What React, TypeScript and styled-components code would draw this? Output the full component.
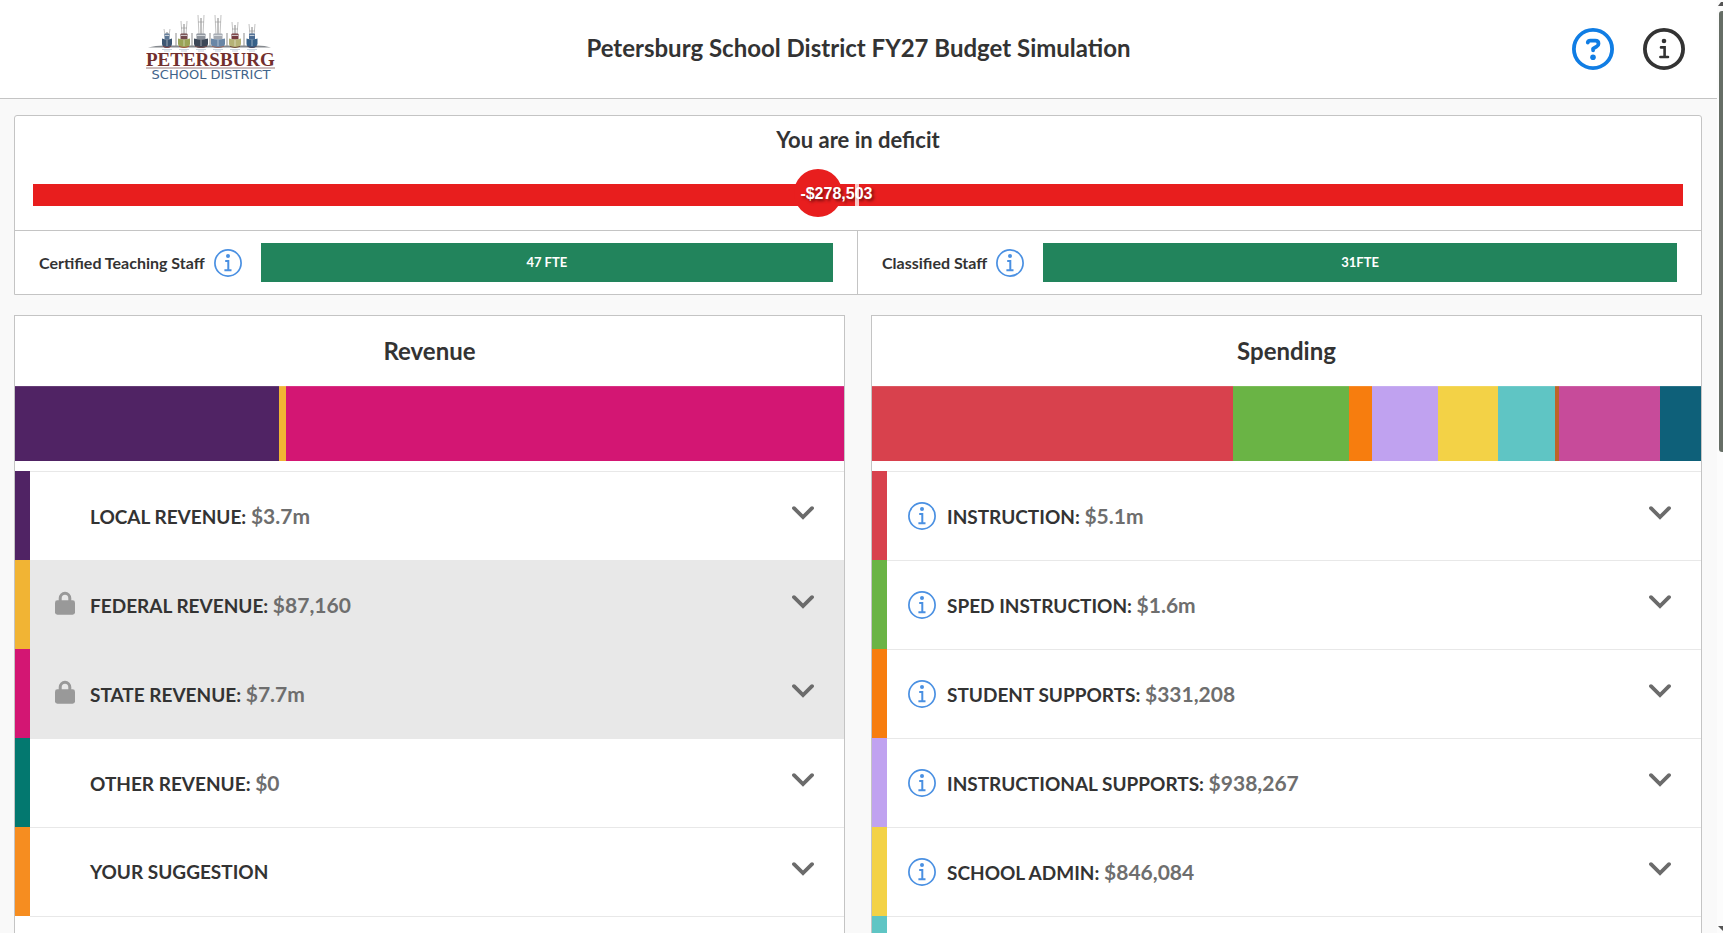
import React from "react";
import styled, { createGlobalStyle } from "styled-components";

const GlobalStyle = createGlobalStyle`
  *, *::before, *::after { box-sizing: border-box; }
  body {
    margin: 0;
    background: #f9f9f9;
    color: #333;
    font-family: Lato, "Open Sans", sans-serif;
    font-weight: 700;
  }
  h1, h2, h3, p, ul { margin: 0; padding: 0; }
  button { margin: 0; padding: 0; border: 0; background: none; color: inherit; font: inherit; cursor: pointer; }
  svg { display: block; }
`;

const Shell = styled.div`
  display: grid;
  grid-template-columns: minmax(0, 1fr) 6px;
  height: 100vh;
  overflow: hidden;
`;

const Page = styled.div`
  min-width: 0;
  overflow: hidden;
`;

const Header = styled.header`
  display: grid;
  grid-template-columns: 1fr auto 1fr;
  align-items: center;
  height: 99px;
  padding: 0 32px;
  background: #fff;
  border-bottom: 1px solid #c4c4c4;
`;

const LogoLink = styled.a`
  justify-self: start;
  margin: 0 0 2px 114px;
`;

const PageTitle = styled.h1`
  margin-bottom: 2px;
  font-size: 24px;
  line-height: 28px;
`;

const HeaderActions = styled.div`
  display: flex;
  justify-self: end;
  gap: 29px;
`;

const Main = styled.main`
  padding: 16px 15px 0 14px;
`;

const ScoreCard = styled.section`
  background: #fff;
  border: 1px solid #c4c4c4;
  border-radius: 3px 3px 0 0;
`;

const Balance = styled.div`
  height: 114px;
  padding: 11px 18px 0;
  text-align: center;
`;

const BalanceTitle = styled.h2`
  font-size: 22px;
  line-height: 26px;
`;

const Track = styled.div`
  position: relative;
  height: 22px;
  margin-top: 31px;
  background: #e81e1e;
`;

const Knob = styled.div`
  position: absolute;
  top: 50%;
  left: 47.6%;
  display: flex;
  align-items: center;
  width: 48px;
  height: 48px;
  margin: -26px 0 0 -24px;
  padding: 2px 0 0 6px;
  border-radius: 50%;
  background: #e81e1e;
  color: #fff;
  font: 700 16px/20px "Liberation Sans", Arial, sans-serif;
  text-shadow: 2px 2px 3px rgba(0, 0, 0, 0.5);
  white-space: nowrap;
`;

const MidMark = styled.div`
  position: absolute;
  top: 0;
  left: 50%;
  width: 4px;
  height: 100%;
  margin-left: -3px;
  background: rgba(255, 255, 255, 0.75);
`;

const StaffRow = styled.div`
  display: grid;
  grid-template-columns: 1fr 1fr;
  border-top: 1px solid #c4c4c4;
`;

const StaffCell = styled.div`
  display: flex;
  align-items: center;
  height: 63px;
  padding: 0 24px;
  &:first-child { border-right: 1px solid #c4c4c4; }
`;

const StaffLabel = styled.h3`
  margin-right: 9px;
  font-size: 16px;
  line-height: 20px;
  white-space: nowrap;
`;

const StaffBar = styled.div`
  flex: 1;
  margin-left: 19px;
  background: #22845c;
  color: #fff;
  font-size: 13px;
  line-height: 39px;
  text-align: center;
`;

const Columns = styled.div`
  display: grid;
  grid-template-columns: 1fr 1fr;
  gap: 26px;
  margin-top: 20px;
`;

const Column = styled.section`
  background: #fff;
  border: 1px solid #c4c4c4;
`;

const ColumnTitle = styled.h2`
  font-size: 24px;
  line-height: 70px;
  text-align: center;
`;

const Segments = styled.div`
  display: flex;
  height: 75px;
  margin-bottom: 10px;
`;

const Segment = styled.div<{ $color: string; $share: number }>`
  flex: ${(p) => p.$share} 1 0;
  background: ${(p) => p.$color};
  border-top: 1px solid rgba(255, 255, 255, 0.12);
`;

const Rows = styled.ul`
  list-style: none;
`;

const Row = styled.li<{ $color: string; $locked?: boolean }>`
  display: flex;
  height: 89px;
  background: ${(p) => (p.$locked ? "#e8e8e8" : "#fff")};
  &::before {
    content: "";
    width: 15px;
    background: ${(p) => p.$color};
  }
`;

const RowBody = styled.div`
  display: flex;
  flex: 1;
  align-items: center;
  padding-right: 30px;
  border-top: 1px solid #e8e8e8;
`;

const IconSlot = styled.div`
  display: flex;
  justify-content: center;
  width: 28px;
  margin: 0 11px 0 21px;
`;

const RowToggle = styled.button`
  display: flex;
  flex: 1;
  align-items: center;
  justify-content: space-between;
  height: 100%;
  font-size: 19px;
  line-height: 24px;
  text-align: left;
  svg { margin-bottom: 6px; }
`;

const Amount = styled.span`
  color: #6e6e6e;
  font-size: 21px;
`;

const Scrollbar = styled.div`
  display: flex;
  flex-direction: column;
  align-items: flex-end;
  padding: 2px 0;
  background: #fcfcfc;
`;

const Thumb = styled.div`
  flex: 0 0 calc(47% + 4px);
  width: 4px;
  margin: 4px 0 auto;
  border-radius: 3px 0 0 3px;
  background: #666e66;
`;

const InfoIcon = () => (
  <svg width="28" height="28" viewBox="0 0 28 28" fill="none" stroke="#4a90e2">
    <circle cx="14" cy="14" r="13.1" strokeWidth="1.7" />
    <circle cx="14" cy="7" r="2" fill="#4a90e2" stroke="none" />
    <path d="M11.2 12H14.3V21.2M10.4 21.2H17.5" strokeWidth="2" />
  </svg>
);

const HelpIcon = () => (
  <svg width="42" height="42" viewBox="0 0 42 42" fill="none" stroke="#107de4">
    <circle cx="21" cy="21" r="19.1" strokeWidth="3.8" />
    <path
      d="M15.8 14.6V14.2Q16.2 12.7 18.4 12.7H23.2Q26.5 12.7 26.5 15.7Q26.5 17.6 24.5 18.7L21.1 20.6V22.3"
      strokeWidth="3.8"
      strokeLinecap="round"
      strokeLinejoin="round"
    />
    <circle cx="21" cy="29.3" r="2.8" fill="#107de4" stroke="none" />
  </svg>
);

const AboutIcon = () => (
  <svg width="42" height="42" viewBox="0 0 42 42" fill="none" stroke="#333">
    <circle cx="21" cy="21" r="19.1" strokeWidth="3.8" />
    <circle cx="21" cy="13" r="2.3" fill="#333" stroke="none" />
    <path d="M18 19.4H21.6V29M17.4 29H25" strokeWidth="2.6" strokeLinecap="round" />
  </svg>
);

const LockIcon = () => (
  <svg width="20" height="28" viewBox="0 0 20 28">
    <path d="M5.2 11V7.2a4.8 5 0 0 1 9.6 0V11" fill="none" stroke="#999" strokeWidth="3" />
    <rect y="9.3" width="20" height="14.4" rx="2.4" fill="#999" />
  </svg>
);

const Chevron = () => (
  <svg width="22" height="14" viewBox="0 0 22 14" fill="none">
    <path d="M2 2.2L11 11L20 2.2" stroke="#6b6b6b" strokeWidth="3.8" strokeLinecap="round" />
  </svg>
);

const ScrollArrow = ({ down }: { down?: boolean }) => (
  <svg width="5" height="5" viewBox="0 0 5 5">
    <path d={down ? "M0 0H5V5Z" : "M0 4L3 0H5V4Z"} fill="#555" />
  </svg>
);

const boats = [
  { x: 21, top: 14, w: 10, hull: "#3d5672", keel: "#8b4545", cabin: "#5b7694" },
  { x: 38, top: 6, w: 12, hull: "#9aa457", keel: "#a55848", cabin: "#72494c" },
  { x: 55, top: 0, w: 14, hull: "#3c4757", keel: "#7c5252", cabin: "#8b919a" },
  { x: 72, top: 0, w: 14, hull: "#6986a6", keel: "#9c6c63", cabin: "#a4a9b1" },
  { x: 89, top: 7, w: 12, hull: "#b5b276", keel: "#755347", cabin: "#763b3e" },
  { x: 106, top: 9, w: 11, hull: "#356088", keel: "#544b5e", cabin: "#496a91" },
];

const Logo = () => (
  <svg width="130" height="70" viewBox="0 -2 130 70" role="img" aria-label="Petersburg School District">
    <path d="M2 32.5Q10 30.5 19 30.6H111Q119 30.6 125 32.5Z" fill="#85898e" />
    {[30, 46, 64, 81, 98].map((x) => (
      <path key={x} d={`M${x} 18V31`} stroke="#8d8d8d" strokeWidth="1" />
    ))}
    {boats.map((b) => {
      const half = b.w / 2;
      return (
        <g key={b.x}>
          <path d={`M${b.x} ${b.top + 3}V20`} stroke="#777" strokeWidth="0.9" />
          <path
            d={`M${b.x - 2} 20L${b.x - 3} ${b.top}M${b.x + 2} 20L${b.x + 3} ${b.top}M${b.x - 3} ${b.top + 7}H${b.x + 3}`}
            stroke="#999"
            strokeWidth="0.6"
          />
          <rect x={b.x - half + 2.5} y="18.5" width={b.w - 5} height="6" rx="0.8" fill={b.cabin} />
          <path d={`M${b.x - half + 3} 20.4H${b.x + half - 3}`} stroke="#e3e6ea" strokeWidth="0.9" />
          <path
            d={`M${b.x - half} 23.4Q${b.x} 25.4 ${b.x + half} 23.4V29Q${b.x + half - 0.5} 32.2 ${b.x + 1} 33H${b.x - 1}Q${b.x - half + 0.5} 32.2 ${b.x - half} 29Z`}
            fill={b.hull}
          />
          <path d={`M${b.x} 25V31`} stroke="#fff" strokeOpacity="0.35" strokeWidth="1.4" />
          <path d={`M${b.x - half + 1} 31.4Q${b.x} 33.8 ${b.x + half - 1} 31.4`} fill="none" stroke={b.keel} />
          <path d={`M${b.x - 5} 34.5H${b.x + 5}M${b.x - 3} 36H${b.x + 3}`} stroke="#c9d2dd" />
        </g>
      );
    })}
    <text x="0" y="51" fill="#722f2d" fontFamily="'Liberation Serif', serif" fontSize="19" fontWeight="700">
      PETERSBURG
    </text>
    <path d="M0 53H129" stroke="#9a7b7b" />
    <text x="65" y="64" textAnchor="middle" fill="#3f648a" fontFamily="'DejaVu Sans', sans-serif" fontSize="13" fontWeight="400">
      SCHOOL DISTRICT
    </text>
  </svg>
);

type Item = { name: string; amount?: string; color: string; locked?: boolean; info?: boolean };
type Part = [color: string, share: number];

const revenue: Item[] = [
  { name: "LOCAL REVENUE", amount: "$3.7m", color: "#502364" },
  { name: "FEDERAL REVENUE", amount: "$87,160", color: "#f1b434", locked: true },
  { name: "STATE REVENUE", amount: "$7.7m", color: "#d31673", locked: true },
  { name: "OTHER REVENUE", amount: "$0", color: "#03786f" },
  { name: "YOUR SUGGESTION", color: "#f68d20" },
];

const revenueParts: Part[] = [["#502364", 264], ["#f1b434", 7], ["#d31673", 558]];

const spending: Item[] = [
  { name: "INSTRUCTION", amount: "$5.1m", color: "#d8414d", info: true },
  { name: "SPED INSTRUCTION", amount: "$1.6m", color: "#6ab445", info: true },
  { name: "STUDENT SUPPORTS", amount: "$331,208", color: "#f77d0e", info: true },
  { name: "INSTRUCTIONAL SUPPORTS", amount: "$938,267", color: "#c0a2f0", info: true },
  { name: "SCHOOL ADMIN", amount: "$846,084", color: "#f3d246", info: true },
];

const spendingParts: Part[] = [
  ["#d8414d", 361], ["#6ab445", 116], ["#f77d0e", 23], ["#c0a2f0", 66], ["#f3d246", 60],
  ["#5fc5c4", 57], ["#bd6428", 4], ["#c74b9a", 101], ["#0e6079", 41],
];

type BudgetColumnProps = { title: string; parts: Part[]; items: Item[]; nextColor: string };

const BudgetColumn = ({ title, parts, items, nextColor }: BudgetColumnProps) => (
  <Column>
    <ColumnTitle>{title}</ColumnTitle>
    <Segments>
      {parts.map(([color, share]) => (
        <Segment key={color} $color={color} $share={share} />
      ))}
    </Segments>
    <Rows>
      {items.map((item) => (
        <Row key={item.name} $color={item.color} $locked={item.locked}>
          <RowBody>
            <IconSlot>
              {item.locked && <LockIcon />}
              {item.info && (
                <button aria-label={`About ${item.name}`}>
                  <InfoIcon />
                </button>
              )}
            </IconSlot>
            <RowToggle aria-expanded={false}>
              <span>
                {item.name}
                {item.amount && <>: <Amount>{item.amount}</Amount></>}
              </span>
              <Chevron />
            </RowToggle>
          </RowBody>
        </Row>
      ))}
      <Row $color={nextColor}>
        <RowBody />
      </Row>
    </Rows>
  </Column>
);

export default function App() {
  return (
    <Shell>
      <GlobalStyle />
      <Page>
        <Header>
          <LogoLink href="#">
            <Logo />
          </LogoLink>
          <PageTitle>Petersburg School District FY27 Budget Simulation</PageTitle>
          <HeaderActions>
            <button aria-label="Help"><HelpIcon /></button>
            <button aria-label="About"><AboutIcon /></button>
          </HeaderActions>
        </Header>
        <Main>
          <ScoreCard>
            <Balance>
              <BalanceTitle>You are in deficit</BalanceTitle>
              <Track>
                <Knob>-$278,503</Knob>
                <MidMark />
              </Track>
            </Balance>
            <StaffRow>
              <StaffCell>
                <StaffLabel>Certified Teaching Staff</StaffLabel>
                <button aria-label="About Certified Teaching Staff"><InfoIcon /></button>
                <StaffBar>47 FTE</StaffBar>
              </StaffCell>
              <StaffCell>
                <StaffLabel>Classified Staff</StaffLabel>
                <button aria-label="About Classified Staff"><InfoIcon /></button>
                <StaffBar>31FTE</StaffBar>
              </StaffCell>
            </StaffRow>
          </ScoreCard>
          <Columns>
            <BudgetColumn title="Revenue" parts={revenueParts} items={revenue} nextColor="transparent" />
            <BudgetColumn title="Spending" parts={spendingParts} items={spending} nextColor="#5fc5c4" />
          </Columns>
        </Main>
      </Page>
      <Scrollbar aria-hidden="true">
        <ScrollArrow />
        <Thumb />
        <ScrollArrow down />
      </Scrollbar>
    </Shell>
  );
}
